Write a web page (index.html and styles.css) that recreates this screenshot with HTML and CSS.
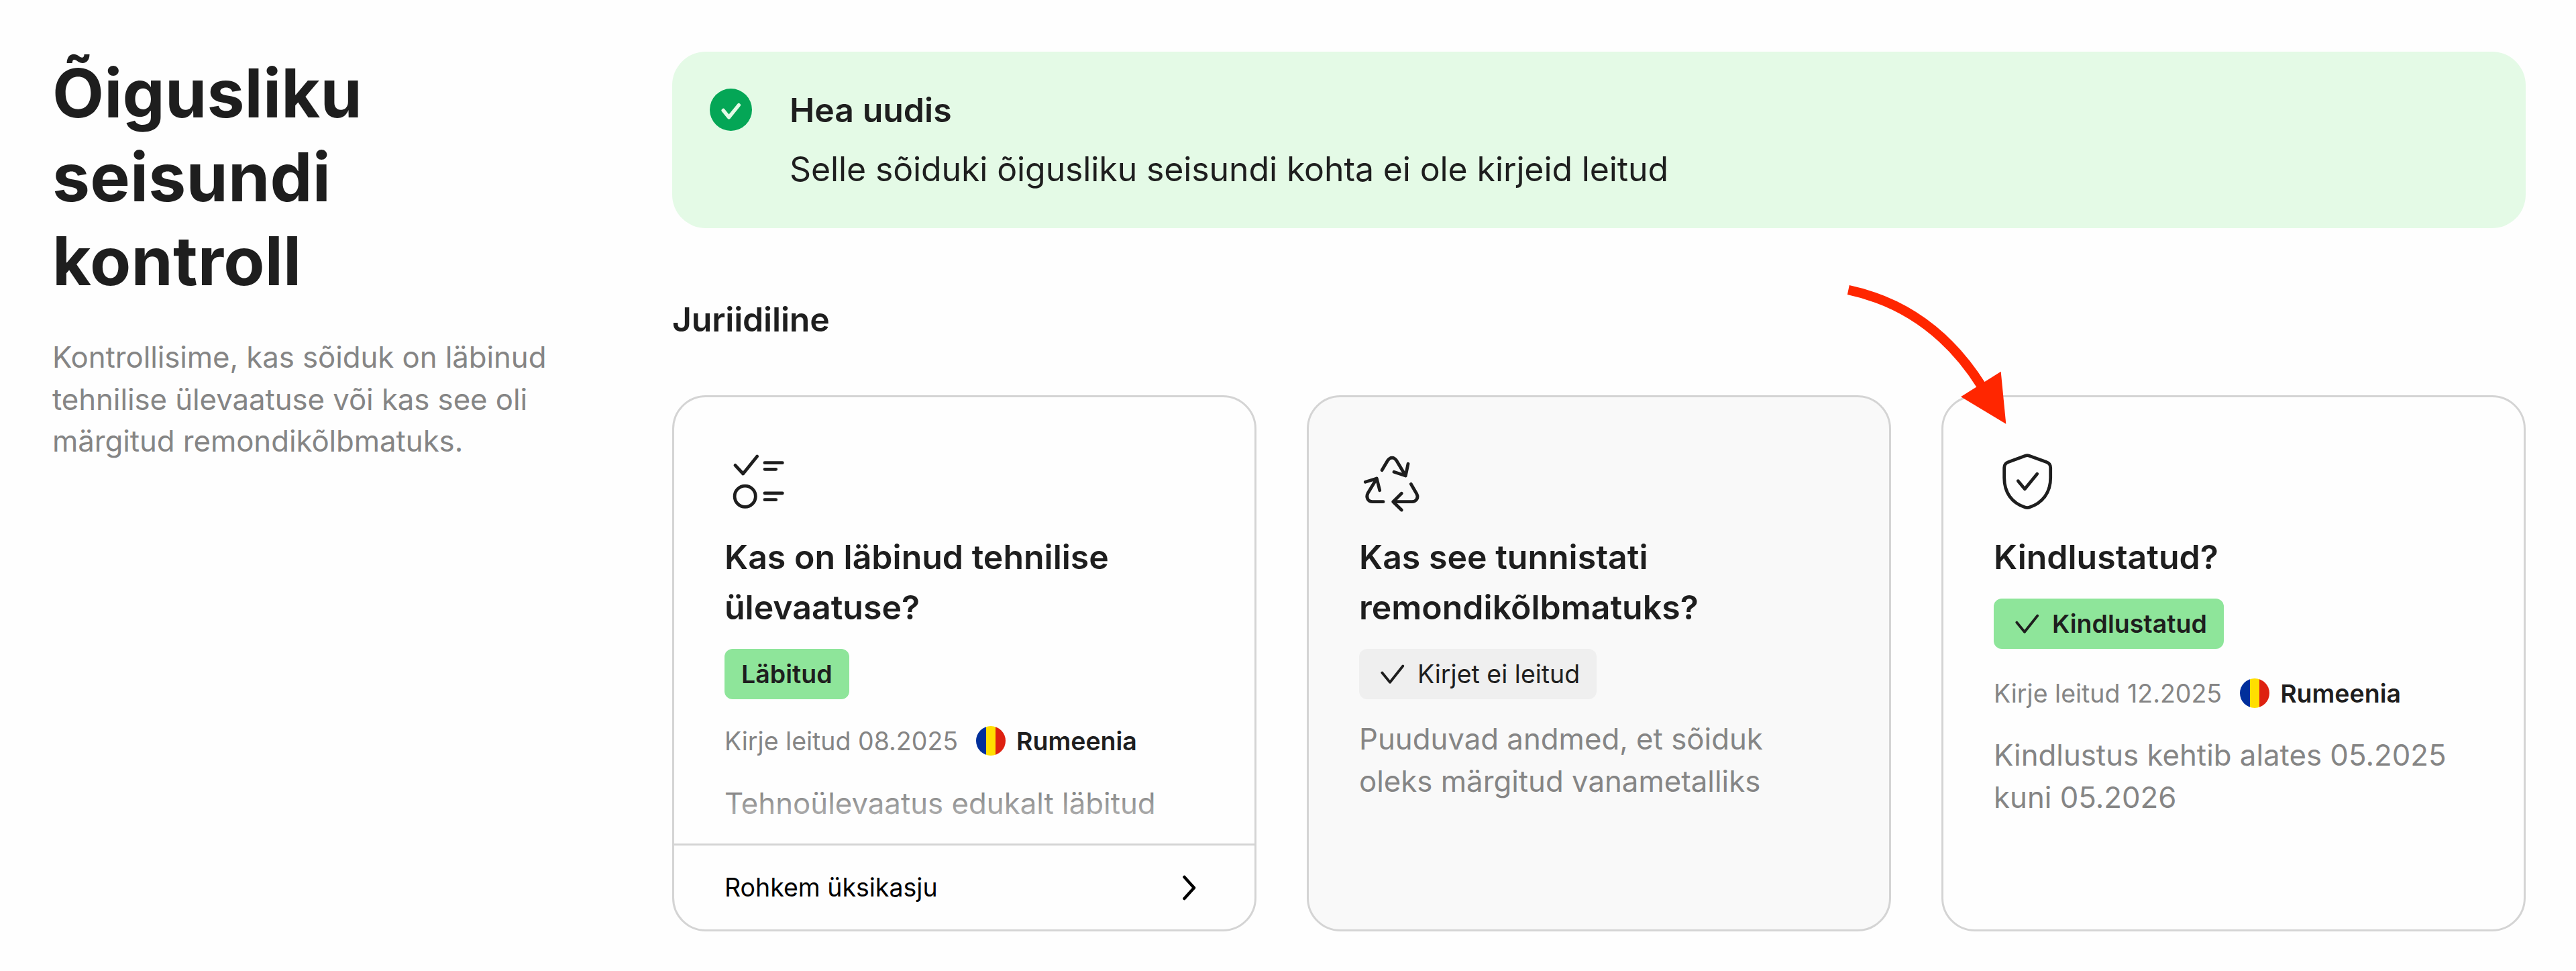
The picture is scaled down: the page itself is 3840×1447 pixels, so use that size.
FILE: index.html
```html
<!DOCTYPE html>
<html lang="et">
<head>
    <meta charset="UTF-8">
    <meta name="viewport" content="width=device-width, initial-scale=1.0">
    <title>Õigusliku seisundi kontroll</title>
    <link rel="stylesheet" href="styles.css">
</head>
<body>
<section class="legal">
    <div class="intro">
        <h2>Õigusliku seisundi kontroll</h2>
        <p>Kontrollisime, kas sõiduk on läbinud tehnilise ülevaatuse või kas see oli märgitud remondikõlbmatuks.</p>
    </div>

    <div class="content">
        <div class="alert">
            <svg class="alert-icon" viewBox="0 0 64 64">
                <circle cx="32" cy="32" r="32"/>
                <path d="M20.5 33l8.5 10.5 15-18.5"/>
            </svg>
            <div>
                <h3>Hea uudis</h3>
                <p>Selle sõiduki õigusliku seisundi kohta ei ole kirjeid leitud</p>
            </div>
        </div>

        <h3 class="group-title">Juriidiline</h3>

        <div class="cards">
            <div class="card">
                <div class="card-body fade">
                    <svg class="icon card-icon" viewBox="0 0 100 100">
                        <path d="M16 26.3L27.7 39l21-26M60 22.7h26.3M60 32.3h16.7M60 68h26.3M60 77.7h16.7"/>
                        <circle cx="30.7" cy="72.7" r="15.6"/>
                    </svg>
                    <h4>Kas on läbinud tehnilise ülevaatuse?</h4>
                    <span class="badge success">Läbitud</span>
                    <div class="record">
                        <span>Kirje leitud 08.2025</span>
                        <i class="flag"></i>
                        <b>Rumeenia</b>
                    </div>
                    <p>Tehnoülevaatus edukalt läbitud</p>
                </div>
                <a class="more" href="#">
                    Rohkem üksikasju
                    <svg class="icon chevron" viewBox="0 0 50 50"><path d="M20.5 9L35 25 20.5 41"/></svg>
                </a>
            </div>

            <div class="card muted">
                <div class="card-body">
                    <svg class="icon card-icon" viewBox="0 0 100 100">
                        <path d="M34 33.7l8.3-14c4-6 9.7-6 13.7 0L69.3 42M52 36.3L69.3 42 73 24.3"/>
                        <path d="M9.3 51.3L26.3 46l4.4 17.7M26.3 46L13 68c-3 6 0 12.7 7 12.7h16"/>
                        <path d="M77.3 54.3L86 69.3c3 5.5-1 11.4-7 11.4H50.7M63.3 68.3L50.7 80.7 63.3 93"/>
                    </svg>
                    <h4>Kas see tunnistati remondikõlbmatuks?</h4>
                    <span class="badge"><svg class="icon" viewBox="0 0 50 50"><path d="M9.3 22.5L21 36.8l19.3-24.3"/></svg>Kirjet ei leitud</span>
                    <p>Puuduvad andmed, et sõiduk oleks märgitud vanametalliks</p>
                </div>
            </div>

            <div class="card">
                <div class="card-body insured">
                    <svg class="icon card-icon" viewBox="0 0 100 100">
                        <path d="M47 12.2c2-.7 4-.7 6 0l25.5 9.3c4 1.4 6.2 4.5 6.2 8.5v15c0 22-12 37.5-31.5 44-2 .8-4.400.8-6.400 0C27 82.5 15.700 67 15.700 45V30c0-4 2.200-7.100 6.200-8.500z"/>
                        <path d="M36.3 49.7l10 12 18.4-22.5"/>
                    </svg>
                    <h4>Kindlustatud?</h4>
                    <span class="badge success"><svg class="icon" viewBox="0 0 50 50"><path d="M9.3 22.5L21 36.8l19.3-24.3"/></svg>Kindlustatud</span>
                    <div class="record">
                        <span>Kirje leitud 12.2025</span>
                        <i class="flag"></i>
                        <b>Rumeenia</b>
                    </div>
                    <p>Kindlustus kehtib alates 05.2025 kuni 05.2026</p>
                </div>
                <svg class="arrow" viewBox="0 0 1500 1200">
                    <path d="M166 156Q541 236 762 586" fill="none" stroke="#ff2600" stroke-width="43"/>
                    <path d="M669 634L848 521 871 755z" fill="#ff2600"/>
                </svg>
            </div>
        </div>
    </div>
</section>
</body>
</html>
```
FILE: styles.css
```css
* {
    box-sizing: border-box;
}
body {
    margin: 0;
    font-family: Inter, sans-serif;
    color: #1e1e1e;
    background: #fefefe;
}
h2, h3, h4, p {
    margin: 0;
}
.legal {
    display: flex;
    gap: 150px;
    padding: 77px 75px 58px 78px;
}
.intro {
    width: 774px;
}
.intro h2 {
    width: 600px;
    margin-top: -1px;
    font-size: 100px;
    line-height: 125px;
    letter-spacing: 0.2px;
}
.intro p {
    margin-top: 51px;
    letter-spacing: -0.06px;
}
p {
    font-size: 43.75px;
    line-height: 62.5px;
    color: #858585;
}
.content {
    flex: 1;
}
.alert {
    display: flex;
    gap: 56px;
    height: 263px;
    padding: 50px 56px;
    border-radius: 50px;
    background: #e4fae6;
}
.alert-icon {
    width: 63px;
    height: 63px;
    margin-top: 5px;
}
.alert-icon circle {
    fill: #04a656;
}
.alert-icon path {
    fill: none;
    stroke: #e4fae6;
    stroke-width: 5.5;
    stroke-linecap: round;
    stroke-linejoin: round;
}
h3, h4 {
    font-size: 50px;
    line-height: 75px;
    font-weight: 600;
}
.alert p {
    margin-top: 13px;
    font-size: 50px;
    line-height: 75px;
    letter-spacing: -0.12px;
    color: #1e1e1e;
}
.group-title {
    margin-top: 99px;
    letter-spacing: -0.2px;
}
.cards {
    display: grid;
    grid-template-columns: repeat(3, 1fr);
    gap: 75px;
    margin-top: 75px;
}
.card {
    position: relative;
    display: flex;
    flex-direction: column;
    height: 799px;
    border: 3px solid #d4d4d4;
    border-radius: 50px;
}
.muted {
    background: #f9f9f9;
}
.card-body {
    position: relative;
    display: flex;
    flex: 1;
    flex-direction: column;
    align-items: flex-start;
    padding: 75px 75px 0;
}
.icon {
    display: block;
    flex: none;
    width: 50px;
    height: 50px;
    fill: none;
    stroke: #1e1e1e;
    stroke-width: 3.8;
    stroke-linecap: round;
    stroke-linejoin: round;
}
.card-icon {
    width: 100px;
    height: 100px;
    margin-bottom: 26px;
    stroke-width: 4.8;
}
.badge {
    display: flex;
    align-items: center;
    height: 75px;
    margin-top: 24px;
    padding: 0 25px;
    border-radius: 12px;
    background: #efefef;
    font-size: 37.5px;
}
.badge .icon {
    margin-right: 12px;
}
.badge + p {
    margin-top: 29px;
}
.success {
    background: #8ee59a;
    font-weight: 600;
}
.record {
    display: flex;
    align-items: center;
    height: 62px;
    margin-top: 31px;
    font-size: 37.5px;
    color: #858585;
}
.insured .record {
    margin-top: 35px;
}
.record b {
    font-weight: 600;
    color: #1e1e1e;
}
.record + p {
    margin-top: 32px;
}
.insured .record + p {
    margin-top: 31px;
}
.flag {
    width: 44px;
    height: 44px;
    margin: 0 16px 0 27px;
    border-radius: 50%;
    background: linear-gradient(90deg, #002f9b 33%, #ffde00 33% 66%, #de2110 66%);
}
.fade::after {
    content: "";
    position: absolute;
    left: 0;
    right: 0;
    bottom: 0;
    height: 78px;
    background: linear-gradient(rgba(254,254,254,0), rgba(254,254,254,0.7));
}
.more {
    display: flex;
    align-items: center;
    justify-content: space-between;
    height: 128px;
    padding: 0 75px;
    border-top: 3px solid #d4d4d4;
    font-size: 37.5px;
    color: #000;
    text-decoration: none;
}
.chevron {
    stroke: #000;
    stroke-width: 4.5;
}
/* pointer over the insurance card */
.arrow {
    position: absolute;
    left: -197px;
    top: -212px;
    width: 500px;
    height: 400px;
    pointer-events: none;
}
```
